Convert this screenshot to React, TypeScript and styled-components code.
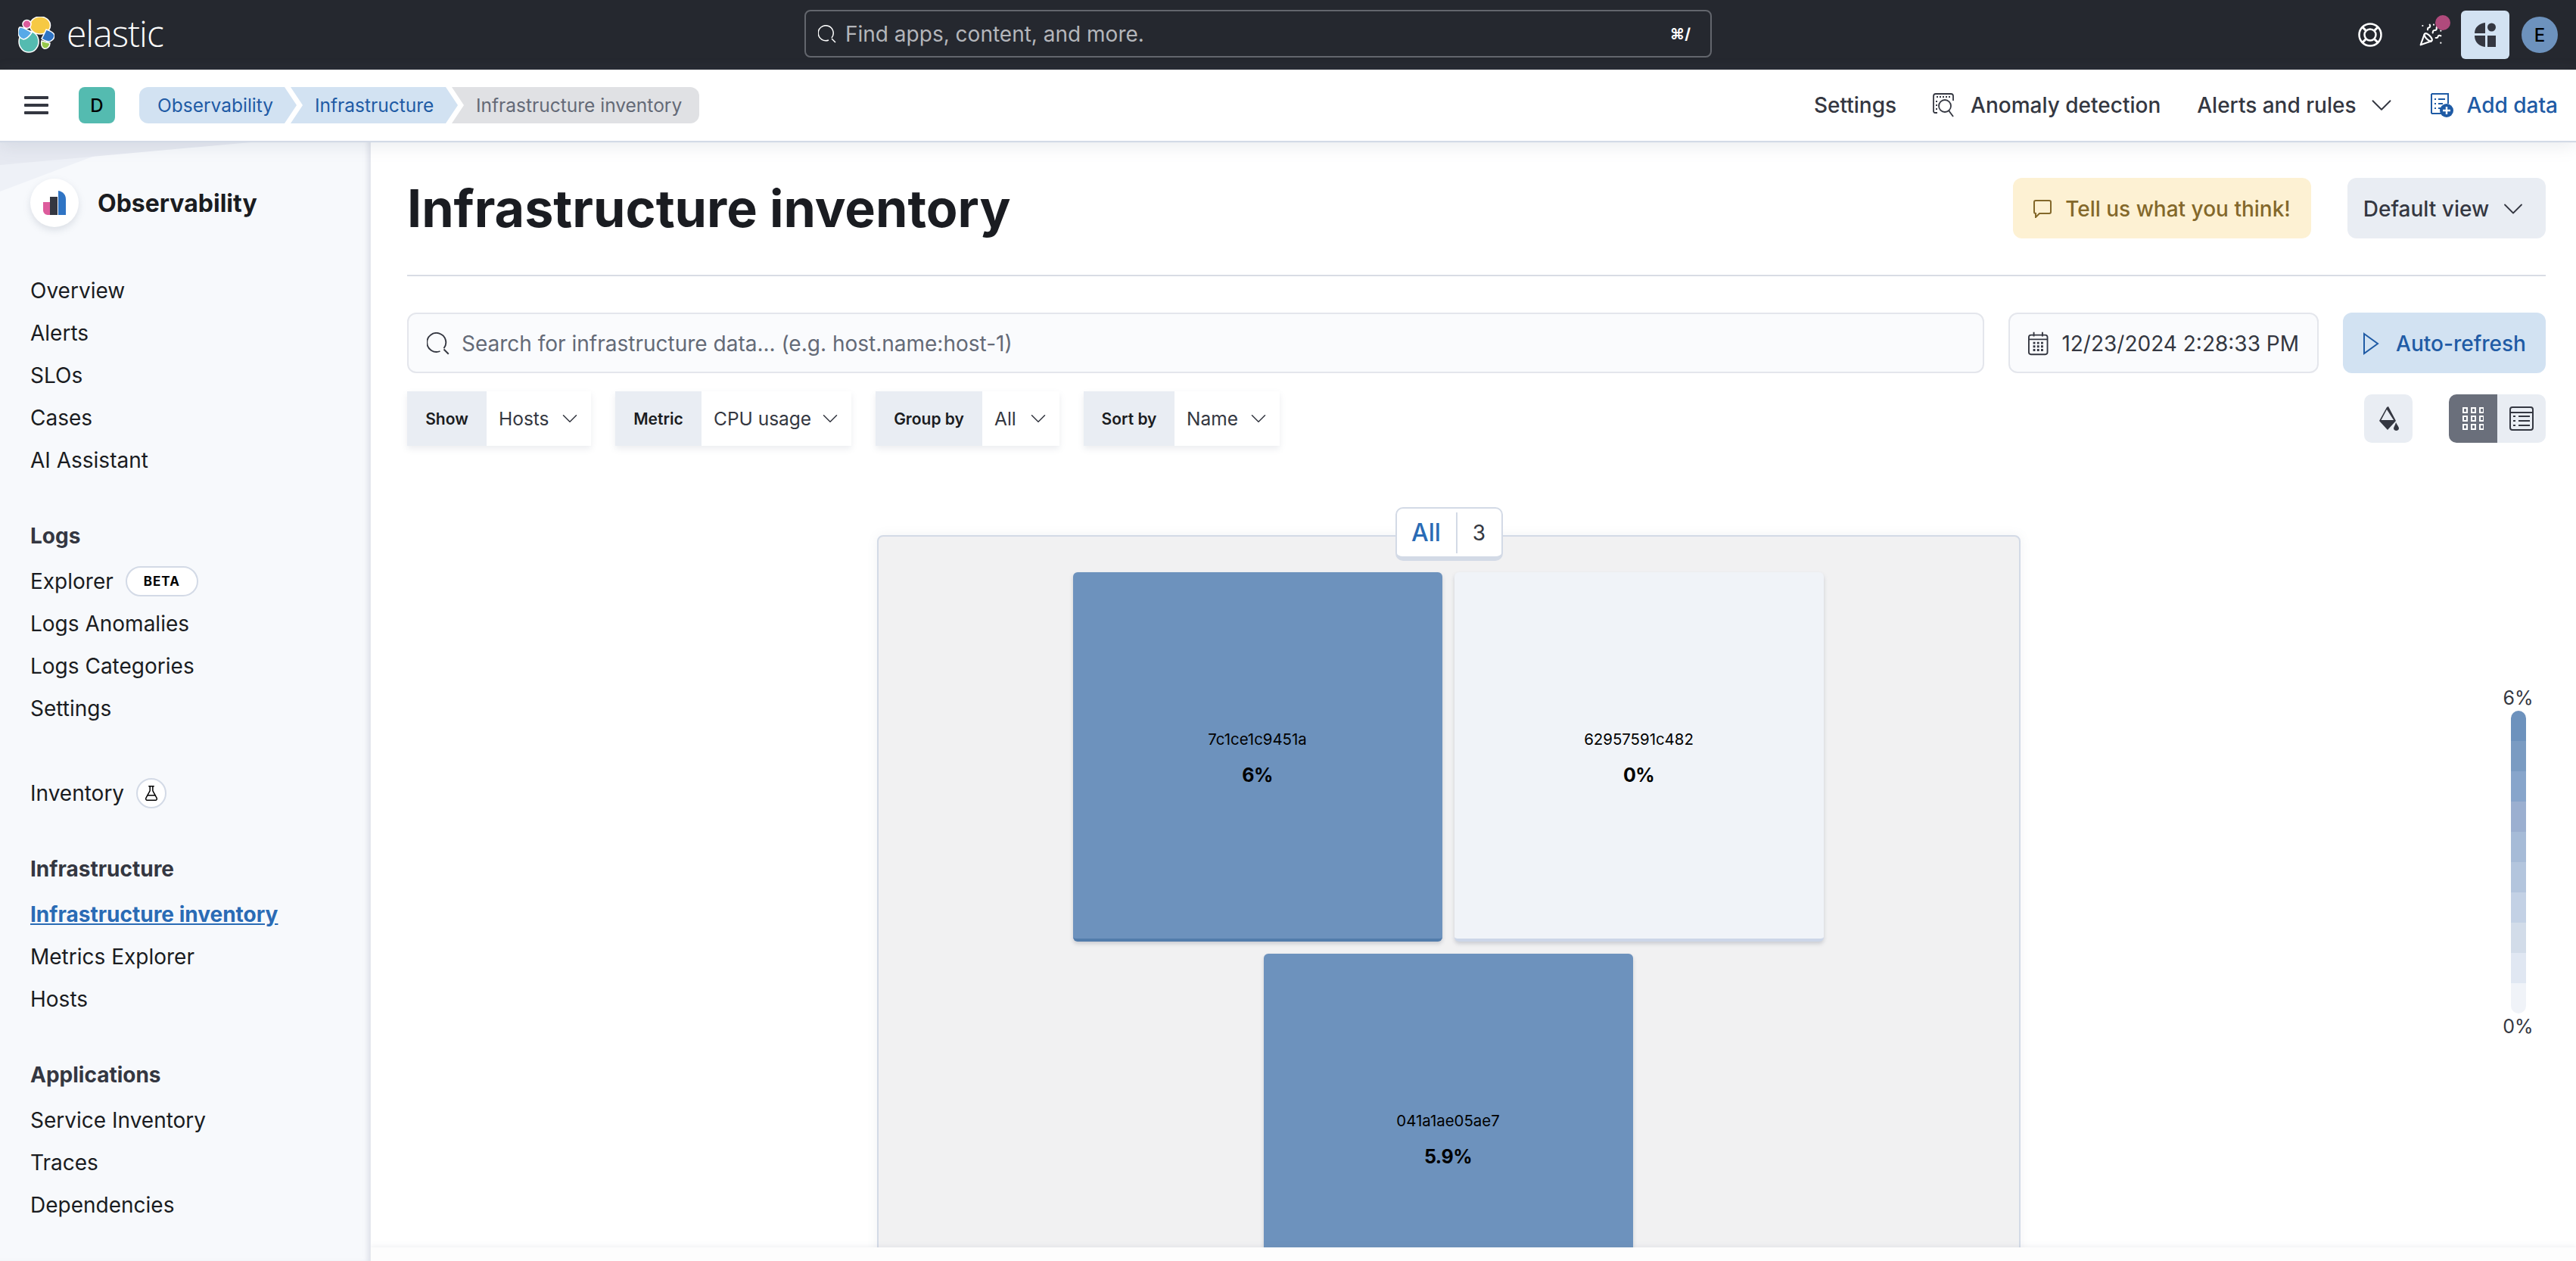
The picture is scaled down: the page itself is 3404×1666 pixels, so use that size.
import React from 'react';
import styled, { createGlobalStyle } from 'styled-components';
import { ChevronDown, FlaskConical, PartyPopper } from 'lucide-react';

const GlobalStyle = createGlobalStyle`
  html, body {
    margin: 0;
    padding: 0;
    height: 100%;
    overflow: hidden;
    background: #ffffff;
    font-family: Inter, "Liberation Sans", sans-serif;
    color: #343741;
  }
  * { box-sizing: border-box; }
`;

const Page = styled.div`
  width: 100vw;
  height: 100vh;
  display: flex;
  flex-direction: column;
  overflow: hidden;
`;

const TopBar = styled.header`
  height: 92px;
  flex: none;
  background: #25282f;
  display: grid;
  grid-template-columns: 1063px 1199px 1fr;
  align-items: center;
`;

const Brand = styled.div`
  display: flex;
  align-items: center;
  gap: 16px;
  padding-left: 24px;
`;

const BrandName = styled.span`
  color: #ffffff;
  font-family: "Open Sans", sans-serif;
  font-size: 48px;
  font-weight: 300;
  letter-spacing: -1px;
  line-height: 1;
  margin-top: -4px;
`;

const GlobalSearch = styled.div`
  height: 63px;
  margin-bottom: 3px;
  border: 2px solid #63666d;
  border-radius: 8px;
  display: flex;
  align-items: center;
  padding: 0 26px 0 16px;
  color: #b4b6bb;
  font-size: 28px;
  gap: 12px;
`;

const Grow = styled.span`
  flex: 1;
`;

const Shortcut = styled.span`
  color: #ffffff;
  font-size: 20px;
  font-weight: 700;
`;

const TopIcons = styled.div`
  display: flex;
  align-items: center;
  justify-content: flex-end;
  padding-right: 24px;
`;

const TopIconSlot = styled.div<{ $right: number }>`
  position: relative;
  display: flex;
  color: #ffffff;
  margin-right: ${p => p.$right}px;
`;

const NewsDot = styled.span`
  position: absolute;
  top: -10px;
  right: -10px;
  width: 20px;
  height: 20px;
  border-radius: 50%;
  background: #b04a7c;
`;

const SpacesButton = styled.div`
  width: 64px;
  height: 64px;
  border-radius: 6px;
  background: #d2e2f2;
  display: flex;
  align-items: center;
  justify-content: center;
  margin-right: 16px;
`;

const Avatar = styled.div`
  width: 48px;
  height: 48px;
  border-radius: 50%;
  background: #6d92bd;
  color: #000000;
  font-size: 24px;
  font-weight: 500;
  display: flex;
  align-items: center;
  justify-content: center;
`;

const SubBar = styled.div`
  height: 94px;
  flex: none;
  background: #ffffff;
  display: flex;
  align-items: center;
  padding: 0 24px 0 32px;
  position: relative;
  z-index: 3;
  box-shadow: 0 2px 1px #d3dae6, 0 6px 22px rgba(120, 130, 150, 0.16);
`;

const Hamburger = styled.div`
  width: 32px;
  height: 24px;
  display: flex;
  flex-direction: column;
  justify-content: space-between;
  margin-right: 40px;
`;

const HamburgerBar = styled.span`
  height: 4px;
  background: #343741;
  border-radius: 1px;
`;

const SpaceBadge = styled.div`
  width: 48px;
  height: 48px;
  border-radius: 8px;
  background: #54bbb0;
  color: #000000;
  font-size: 24px;
  font-weight: 500;
  display: flex;
  align-items: center;
  justify-content: center;
  margin-right: 32px;
`;

const Crumbs = styled.nav`
  display: flex;
  flex: 1;
`;

const Crumb = styled.div<{ $width: number; $first?: boolean; $last?: boolean }>`
  width: ${p => p.$width}px;
  height: 48px;
  display: flex;
  align-items: center;
  font-size: 24.5px;
  font-weight: 400;
  padding-left: ${p => (p.$first ? 24 : 32)}px;
  margin-left: ${p => (p.$first ? 0 : -8)}px;
  border-radius: ${p => (p.$first ? '12px 0 0 12px' : p.$last ? '0 12px 12px 0' : '0')};
  background: ${p => (p.$last ? '#e0e1e4' : '#d2e2f2')};
  color: ${p => (p.$last ? '#646a77' : '#1f5ba5')};
  clip-path: ${p =>
    p.$first
      ? 'polygon(0 0, calc(100% - 16px) 0, 100% 50%, calc(100% - 16px) 100%, 0 100%)'
      : p.$last
        ? 'polygon(0 0, 100% 0, 100% 100%, 0 100%, 16px 50%)'
        : 'polygon(0 0, calc(100% - 16px) 0, 100% 50%, calc(100% - 16px) 100%, 0 100%, 16px 50%)'};
`;

const SubActions = styled.div`
  display: flex;
  align-items: center;
  font-size: 28px;
  font-weight: 500;
  color: #343741;
`;

const SubAction = styled.div<{ $left: number; $gap?: number; $blue?: boolean }>`
  display: flex;
  align-items: center;
  gap: ${p => p.$gap ?? 18}px;
  margin-left: ${p => p.$left}px;
  color: ${p => (p.$blue ? '#1f5ba5' : '#343741')};
`;

const Body = styled.div`
  flex: 1;
  display: flex;
  min-height: 0;
`;

const Sidebar = styled.aside`
  width: 490px;
  flex: none;
  position: relative;
  background: #f7f9fc;
  padding: 50px 0 0 40px;
  box-shadow: inset -6px 0 6px -3px rgba(190, 196, 210, 0.45);
  border-right: 1px solid #e6e8ee;
  overflow: hidden;
`;

const SideCorner = styled.svg`
  position: absolute;
  left: 0;
  top: 0;
`;

const SideTitleRow = styled.div`
  position: relative;
  display: flex;
  align-items: center;
  gap: 25px;
  margin-bottom: 56px;
`;

const LogoCircle = styled.div`
  width: 64px;
  height: 64px;
  border-radius: 50%;
  background: #ffffff;
  box-shadow: 0 4px 10px rgba(120, 130, 150, 0.22);
  display: flex;
  align-items: center;
  justify-content: center;
`;

const SideTitle = styled.h2`
  margin: 0;
  font-size: 32px;
  font-weight: 700;
  color: #1a1c21;
`;

const NavSection = styled.section<{ $gap?: number }>`
  margin-top: ${p => p.$gap ?? 0}px;
`;

const NavHeading = styled.div`
  height: 56px;
  display: flex;
  align-items: center;
  font-size: 28px;
  font-weight: 700;
  color: #343741;
  margin-bottom: 4px;
`;

const NavItem = styled.div<{ $active?: boolean }>`
  height: 56px;
  display: flex;
  align-items: center;
  gap: 16px;
  font-size: 28px;
  font-weight: ${p => (p.$active ? 700 : 400)};
  color: ${p => (p.$active ? '#2a6bb5' : '#1a1c21')};
  text-decoration: ${p => (p.$active ? 'underline' : 'none')};
`;

const BetaPill = styled.span`
  width: 96px;
  height: 40px;
  border: 2px solid #d3dae6;
  border-radius: 20px;
  background: #ffffff;
  color: #000000;
  font-size: 17px;
  font-weight: 700;
  letter-spacing: 1px;
  display: flex;
  align-items: center;
  justify-content: center;
`;

const FlaskPill = styled.span`
  width: 40px;
  height: 40px;
  border: 2px solid #d3dae6;
  border-radius: 50%;
  background: #ffffff;
  color: #000000;
  display: flex;
  align-items: center;
  justify-content: center;
`;

const Main = styled.main`
  flex: 1;
  min-width: 0;
  position: relative;
  overflow: hidden;
  background: #ffffff;
  padding: 50px 40px 0 48px;
`;

const TitleRow = styled.div`
  display: flex;
  align-items: center;
  justify-content: space-between;
  height: 129px;
  padding-bottom: 49px;
  border-bottom: 2px solid #d8dce4;
  margin-bottom: 48px;
`;

const PageTitle = styled.h1`
  margin: 0;
  font-size: 68.2px;
  font-weight: 700;
  color: #1a1c21;
  line-height: 80px;
`;

const TitleActions = styled.div`
  display: flex;
  gap: 48px;
`;

const SoftButton = styled.div<{ $tone: 'warn' | 'plain' | 'blue'; $width: number; $gap?: number }>`
  width: ${p => p.$width}px;
  height: 80px;
  border-radius: 12px;
  display: flex;
  align-items: center;
  justify-content: center;
  gap: ${p => p.$gap ?? 16}px;
  padding-top: 2px;
  font-size: 28px;
  font-weight: 500;
  background: ${p => (p.$tone === 'warn' ? '#fdf1d3' : p.$tone === 'blue' ? '#d2e2f2' : '#e9edf3')};
  color: ${p => (p.$tone === 'warn' ? '#83682a' : p.$tone === 'blue' ? '#1f5ba5' : '#343741')};
`;

const SearchRow = styled.div`
  display: flex;
  gap: 32px;
  margin-bottom: 24px;
`;

const QueryField = styled.div<{ $width?: number }>`
  height: 80px;
  ${p => (p.$width ? `width: ${p.$width}px;` : 'flex: 1;')}
  background: #fafbfd;
  border: 2px solid #e4e6ec;
  border-radius: 12px;
  display: flex;
  align-items: center;
  gap: 16px;
  padding: 2px 24px 0;
  font-size: 28px;
  white-space: nowrap;
`;

const Placeholder = styled.span`
  color: #646a77;
`;

const DateText = styled.span`
  color: #343741;
`;

const FilterRow = styled.div`
  display: flex;
  align-items: center;
`;

const FilterGroup = styled.div<{ $label: number; $value: number }>`
  display: grid;
  grid-template-columns: ${p => p.$label}px ${p => p.$value}px;
  height: 72px;
  margin-right: 32px;
  box-shadow: 0 4px 8px rgba(120, 130, 150, 0.14);
`;

const FilterLabel = styled.div`
  background: #e9edf3;
  color: #1a1c21;
  font-size: 21px;
  font-weight: 600;
  display: flex;
  align-items: center;
  justify-content: center;
`;

const FilterValue = styled.div`
  background: #ffffff;
  color: #343741;
  font-size: 24.5px;
  display: flex;
  align-items: center;
  justify-content: space-between;
  padding: 0 11px 0 16px;
`;

const ToolIcons = styled.div`
  margin-left: auto;
  display: flex;
  gap: 48px;
`;

const ToolButton = styled.div<{ $dark?: boolean; $radius?: string }>`
  width: 64px;
  height: 64px;
  display: flex;
  align-items: center;
  justify-content: center;
  background: ${p => (p.$dark ? '#6a6f7b' : '#e9edf3')};
  color: ${p => (p.$dark ? '#ffffff' : '#343741')};
  border-radius: ${p => p.$radius ?? '10px'};
`;

const ToggleGroup = styled.div`
  display: flex;
`;

const MapRow = styled.div`
  display: flex;
  margin-top: 118px;
`;

const MapArea = styled.div`
  flex: 1;
  display: flex;
  justify-content: center;
`;

const GroupPanel = styled.div`
  position: relative;
  width: 1511px;
  height: 1100px;
  background: #f1f1f2;
  border: 2px solid #d3dae6;
  border-radius: 8px;
  box-shadow: 0 0 14px rgba(120, 130, 150, 0.1);
  padding: 47px 2px 0 0;
`;

const GroupPill = styled.div`
  position: absolute;
  top: -39px;
  left: 50%;
  transform: translateX(-50%);
  width: 142px;
  height: 71px;
  display: grid;
  grid-template-columns: 80px 1fr;
  background: #ffffff;
  border: 2px solid #d3dae6;
  border-bottom-width: 6px;
  border-radius: 10px;
  align-items: center;
  text-align: center;
`;

const GroupName = styled.span`
  color: #2a6bb5;
  font-size: 32px;
  font-weight: 500;
  border-right: 2px solid #d3dae6;
  line-height: 54px;
`;

const GroupCount = styled.span`
  font-size: 28px;
  color: #343741;
`;

const Tiles = styled.div`
  width: 1010px;
  margin: 0 auto;
  display: flex;
  flex-wrap: wrap;
  justify-content: center;
  gap: 16px;
`;

const Tile = styled.div<{ $hot: boolean }>`
  width: 488px;
  height: 488px;
  border-radius: 6px;
  color: #000000;
  background: ${p => (p.$hot ? '#6d92bd' : '#f0f3f8')};
  border-bottom: 4px solid ${p => (p.$hot ? '#527cab' : '#ccd6e8')};
  box-shadow: 0 3px 5px rgba(90, 100, 120, 0.25);
  display: flex;
  flex-direction: column;
  align-items: center;
  padding-top: 207px;
`;

const TileName = styled.div`
  font-size: 20.4px;
  line-height: 28px;
  margin-bottom: 14px;
`;

const TileValue = styled.div`
  font-size: 25px;
  font-weight: 700;
  letter-spacing: -0.5px;
  line-height: 38px;
`;

const Legend = styled.div`
  width: 73px;
  flex: none;
  display: flex;
  flex-direction: column;
  align-items: center;
  margin-top: 200px;
  font-size: 25px;
  color: #343741;
`;

const LegendBar = styled.div`
  width: 20px;
  border-radius: 10px;
  overflow: hidden;
  margin: 2px 0;
`;

const LegendStep = styled.div<{ $color: string }>`
  height: 40px;
  background: ${p => p.$color};
`;

const BottomStrip = styled.div`
  position: absolute;
  left: 0;
  right: 0;
  bottom: 0;
  height: 18px;
  background: #fdfdfd;
  box-shadow: 0 -2px 6px rgba(120, 130, 150, 0.1);
`;

const ElasticLogo = () => (
  <svg width="48" height="48" viewBox="0 0 48 48">
    <g stroke="#ffffff" strokeWidth="1.5">
      <ellipse cx="14" cy="33" rx="13" ry="14" fill="#54bbb0" />
      <path d="M2 14 C6 13 11 17 18 21 C15 26 10 30 7 30 C2 29 0 24 0 22 C0 18 1 15 2 14 Z" fill="#57a9e8" />
      <ellipse cx="29" cy="11.5" rx="13.5" ry="11.5" fill="#f6c944" />
      <ellipse cx="11.5" cy="10" rx="5.5" ry="5.5" fill="#dd5c9c" />
      <path d="M37 17 C42 18 48 22 48 25 C48 29 44 33 40 33 C36 32 33 31 31 29 C33 25 36 20 37 17 Z" fill="#2f74c4" />
      <path d="M31 32 C34 33 38 34 42 35 C42 40 38 43 34 42 C31 41 30 36 31 32 Z" fill="#96c74b" />
    </g>
  </svg>
);

const SearchIcon = ({ size = 24, color = '#ffffff' }: { size?: number; color?: string }) => (
  <svg width={size} height={size} viewBox="0 0 24 24" fill="none" stroke={color} strokeWidth="1.5">
    <path d="M18 17 A10 10 0 1 0 14 20" />
    <path d="M18 18 L23 23" />
  </svg>
);

const LifeBuoyIcon = () => (
  <svg width="32" height="32" viewBox="0 0 32 32" fill="none" stroke="#ffffff" strokeWidth="2.5">
    <circle cx="16" cy="16" r="14.5" />
    <circle cx="16" cy="16" r="7.5" />
    <path d="M6 6 L11 11 M26 6 L21 11 M6 26 L11 21 M26 26 L21 21" strokeWidth="3" />
  </svg>
);

const SpacesIcon = () => (
  <svg width="28" height="32" viewBox="0 0 28 32" fill="#343741">
    <path d="M14 14 H0 C0 6 6 1 14 0 Z" />
    <circle cx="22.5" cy="6" r="5.5" />
    <path d="M14 17 V32 C6 31 0 26 0 17 Z" />
    <rect x="17" y="17" width="11" height="15" />
  </svg>
);

const AnomalyIcon = () => (
  <svg width="32" height="32" viewBox="0 0 32 32" fill="none" stroke="#343741" strokeWidth="1.8">
    <path d="M6 26 H3 C2 26 1 25 1 24 V4 C1 2 2 1 4 1 H24 C26 1 27 2 27 4 V10" />
    <path d="M5 5 H24" strokeDasharray="2 2" strokeWidth="2" />
    <circle cx="16" cy="17" r="8" />
    <path d="M21 23 L27 31" />
    <path d="M5 10 V22" strokeDasharray="2 3" strokeWidth="2" />
  </svg>
);

const AddDataIcon = () => (
  <svg width="30" height="32" viewBox="0 0 30 32" fill="none">
    <path d="M1 1 H23 V14 M14 27 H1 Z M1 1 V27" stroke="#1f5ba5" strokeWidth="2" />
    <path d="M5 8 H7 M10 8 H19 M5 14 H7 M10 14 H16 M5 20 H7 M10 20 H13" stroke="#1f5ba5" strokeWidth="2" />
    <circle cx="21" cy="23" r="9" fill="#1f5ba5" />
    <path d="M21 18 V28 M16 23 H26" stroke="#ffffff" strokeWidth="2.4" />
  </svg>
);

const ChatIcon = () => (
  <svg width="24" height="24" viewBox="0 0 24 24" fill="none" stroke="#83682a" strokeWidth="2">
    <path d="M3 1 H21 C22 1 23 2 23 3 V16 C23 17 22 18 21 18 H8 L3 23 V18 C2 18 1 17 1 16 V3 C1 2 2 1 3 1 Z" />
  </svg>
);

const CalendarIcon = () => (
  <svg width="30" height="32" viewBox="0 0 30 32" fill="none" stroke="#343741" strokeWidth="2">
    <rect x="1" y="4" width="26" height="27" rx="3" />
    <path d="M1 10 H27 M8 0 V6 M20 0 V6" />
    <path d="M7 15 H21 M7 20 H21 M7 25 H21" strokeWidth="3" strokeDasharray="3 2.5" />
  </svg>
);

const PlayIcon = () => (
  <svg width="22" height="30" viewBox="0 0 22 30" fill="none" stroke="#1f5ba5" strokeWidth="2">
    <path d="M2 2 L20 15 L2 28 Z" />
  </svg>
);

const PaintIcon = () => (
  <svg width="28" height="32" viewBox="0 0 28 32" fill="#343741">
    <path d="M12 1 L14 0 L24 19 L13 31 L2 19 Z M12 4 L4.5 18 H21 Z" fillRule="evenodd" />
    <path d="M24 21 C26 25 28 27 28 29 C28 31 26 32 24.5 32 C23 32 21 31 21 29 C21 27 23 25 24 21 Z" />
  </svg>
);

const GridIcon = () => (
  <svg width="28" height="30" viewBox="0 0 28 30" fill="none" stroke="#ffffff" strokeWidth="2">
    {[0, 11, 22].map(y =>
      [0, 11, 22].map(x => <rect key={`${x}-${y}`} x={x + 1} y={y + 1} width="5" height="6" />)
    )}
  </svg>
);

const TableIcon = () => (
  <svg width="32" height="32" viewBox="0 0 32 32" fill="none" stroke="#343741" strokeWidth="2">
    <rect x="1" y="1" width="30" height="30" rx="3" />
    <path d="M1 8 H31" />
    <path d="M5 13 H8 M12 13 H27 M5 19 H8 M12 19 H27 M5 25 H8 M12 25 H27" />
  </svg>
);

const ObservabilityLogo = () => (
  <svg width="30" height="32" viewBox="0 0 30 32">
    <path d="M0 15 H9 V32 H6 C3 32 0 29 0 26 Z" fill="#dd5c9c" />
    <rect x="9" y="8" width="10" height="24" fill="#343741" />
    <path d="M20 0 C26 1 30 5 30 11 V32 H20 Z" fill="#2f74c4" />
  </svg>
);

const filters = [
  { label: 'Show', value: 'Hosts', labelWidth: 105, valueWidth: 138 },
  { label: 'Metric', value: 'CPU usage', labelWidth: 114, valueWidth: 198 },
  { label: 'Group by', value: 'All', labelWidth: 141, valueWidth: 102 },
  { label: 'Sort by', value: 'Name', labelWidth: 120, valueWidth: 139 },
];

const tiles = [
  { name: '7c1ce1c9451a', value: '6%', hot: true },
  { name: '62957591c482', value: '0%', hot: false },
  { name: '041a1ae05ae7', value: '5.9%', hot: true },
];

const legendSteps = [
  '#6d92bd', '#7a9bc2', '#87a5cb', '#9bafd0', '#a6bbd7',
  '#b3c5dd', '#c3d1e5', '#d2dce9', '#e0e7f2', '#f0f3f8',
];

const App: React.FC = () => (
  <Page>
    <GlobalStyle />
    <TopBar>
      <Brand>
        <ElasticLogo />
        <BrandName>elastic</BrandName>
      </Brand>
      <GlobalSearch>
        <SearchIcon />
        <span>Find apps, content, and more.</span>
        <Grow />
        <Shortcut>⌘/</Shortcut>
      </GlobalSearch>
      <TopIcons>
        <TopIconSlot $right={48}><LifeBuoyIcon /></TopIconSlot>
        <TopIconSlot $right={24}>
          <PartyPopper size={32} strokeWidth={1.6} />
          <NewsDot />
        </TopIconSlot>
        <SpacesButton><SpacesIcon /></SpacesButton>
        <Avatar>E</Avatar>
      </TopIcons>
    </TopBar>

    <SubBar>
      <Hamburger>
        <HamburgerBar />
        <HamburgerBar />
        <HamburgerBar />
      </Hamburger>
      <SpaceBadge>D</SpaceBadge>
      <Crumbs>
        <Crumb $width={208} $first>Observability</Crumb>
        <Crumb $width={221}>Infrastructure</Crumb>
        <Crumb $width={327} $last>Infrastructure inventory</Crumb>
      </Crumbs>
      <SubActions>
        <SubAction $left={0}>Settings</SubAction>
        <SubAction $left={48}><AnomalyIcon />Anomaly detection</SubAction>
        <SubAction $left={48} $gap={10}>Alerts and rules <ChevronDown size={46} strokeWidth={1} /></SubAction>
        <SubAction $left={42} $blue><AddDataIcon />Add data</SubAction>
      </SubActions>
    </SubBar>

    <Body>
      <Sidebar>
        <SideCorner width="490" height="120" viewBox="0 0 490 120">
          <polygon points="0,0 178,0 0,67" fill="#eef1f7" />
          <polygon points="0,0 354,0 0,32" fill="#e6e9f1" />
        </SideCorner>
        <SideTitleRow>
          <LogoCircle><ObservabilityLogo /></LogoCircle>
          <SideTitle>Observability</SideTitle>
        </SideTitleRow>
        <NavSection>
          <NavItem>Overview</NavItem>
          <NavItem>Alerts</NavItem>
          <NavItem>SLOs</NavItem>
          <NavItem>Cases</NavItem>
          <NavItem>AI Assistant</NavItem>
        </NavSection>
        <NavSection $gap={44}>
          <NavHeading>Logs</NavHeading>
          <NavItem>Explorer <BetaPill>BETA</BetaPill></NavItem>
          <NavItem>Logs Anomalies</NavItem>
          <NavItem>Logs Categories</NavItem>
          <NavItem>Settings</NavItem>
        </NavSection>
        <NavSection $gap={56}>
          <NavItem>Inventory <FlaskPill><FlaskConical size={22} strokeWidth={1.6} /></FlaskPill></NavItem>
        </NavSection>
        <NavSection $gap={44}>
          <NavHeading>Infrastructure</NavHeading>
          <NavItem $active>Infrastructure inventory</NavItem>
          <NavItem>Metrics Explorer</NavItem>
          <NavItem>Hosts</NavItem>
        </NavSection>
        <NavSection $gap={44}>
          <NavHeading>Applications</NavHeading>
          <NavItem>Service Inventory</NavItem>
          <NavItem>Traces</NavItem>
          <NavItem>Dependencies</NavItem>
        </NavSection>
      </Sidebar>

      <Main>
        <TitleRow>
          <PageTitle>Infrastructure inventory</PageTitle>
          <TitleActions>
            <SoftButton $tone="warn" $width={394} $gap={18}><ChatIcon />Tell us what you think!</SoftButton>
            <SoftButton $tone="plain" $width={262} $gap={10}>Default view <ChevronDown size={44} strokeWidth={1} /></SoftButton>
          </TitleActions>
        </TitleRow>

        <SearchRow>
          <QueryField>
            <SearchIcon size={30} color="#343741" />
            <Placeholder>Search for infrastructure data... (e.g. host.name:host-1)</Placeholder>
          </QueryField>
          <QueryField $width={410}>
            <CalendarIcon />
            <DateText>12/23/2024 2:28:33 PM</DateText>
          </QueryField>
          <SoftButton $tone="blue" $width={268} $gap={22}><PlayIcon />Auto-refresh</SoftButton>
        </SearchRow>

        <FilterRow>
          {filters.map(f => (
            <FilterGroup key={f.label} $label={f.labelWidth} $value={f.valueWidth}>
              <FilterLabel>{f.label}</FilterLabel>
              <FilterValue>{f.value}<ChevronDown size={34} strokeWidth={1.1} /></FilterValue>
            </FilterGroup>
          ))}
          <ToolIcons>
            <ToolButton><PaintIcon /></ToolButton>
            <ToggleGroup>
              <ToolButton $dark $radius="10px 0 0 10px"><GridIcon /></ToolButton>
              <ToolButton $radius="0 10px 10px 0"><TableIcon /></ToolButton>
            </ToggleGroup>
          </ToolIcons>
        </FilterRow>

        <MapRow>
          <MapArea>
            <GroupPanel>
              <GroupPill>
                <GroupName>All</GroupName>
                <GroupCount>3</GroupCount>
              </GroupPill>
              <Tiles>
                {tiles.map(t => (
                  <Tile key={t.name} $hot={t.hot}>
                    <TileName>{t.name}</TileName>
                    <TileValue>{t.value}</TileValue>
                  </Tile>
                ))}
              </Tiles>
            </GroupPanel>
          </MapArea>
          <Legend>
            <span>6%</span>
            <LegendBar>
              {legendSteps.map(c => <LegendStep key={c} $color={c} />)}
            </LegendBar>
            <span>0%</span>
          </Legend>
        </MapRow>
        <BottomStrip />
      </Main>
    </Body>
  </Page>
);

export default App;
